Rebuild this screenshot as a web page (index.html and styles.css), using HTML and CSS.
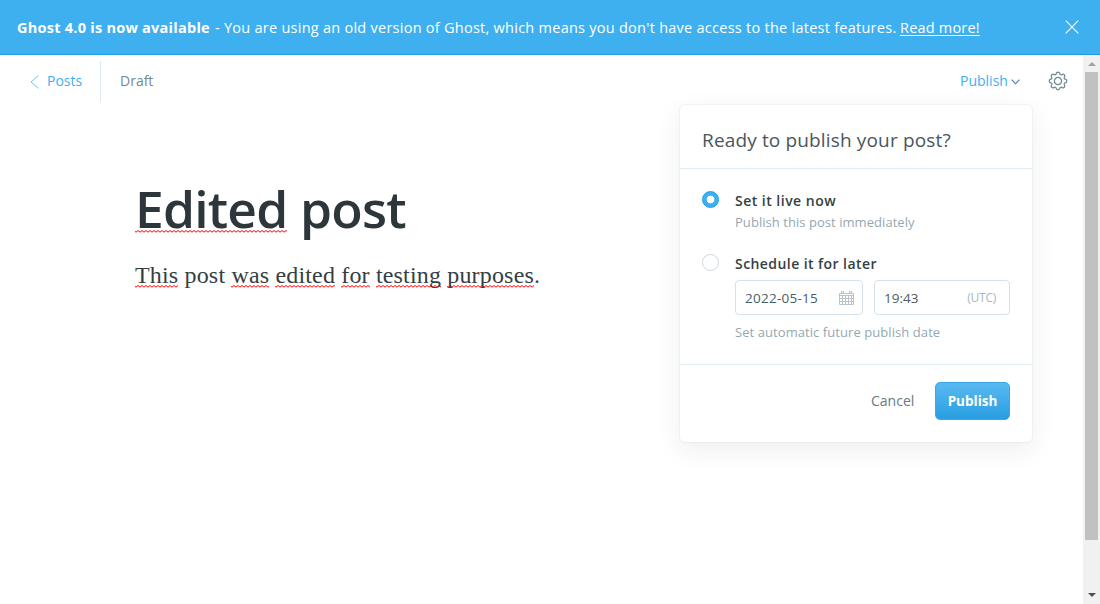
FILE: index.html
```
<!DOCTYPE html>
<html lang="en">
<head>
<meta charset="utf-8">
<title>Edited post - Ghost</title>
<link rel="stylesheet" href="styles.css">
</head>
<body>
<div class="banner">
  <div class="banner-text"><b class="banner-title">Ghost 4.0 is now available</b><span class="banner-copy">- You are using an old version of Ghost, which means you don't have access to the latest features.</span><a class="banner-link">Read more!</a></div>
  <svg class="banner-close" width="14" height="14" viewBox="0 0 14 14"><path d="M.7.7l12.6 12.6M13.3.7L.7 13.3"/></svg>
</div>
<div class="viewport">
  <div class="editor">
    <header class="toolbar">
      <a class="back"><svg class="back-icon" width="9" height="14" viewBox="0 0 9 14"><path d="M8.3.6L1 7l7.3 6.4"/></svg><span class="back-label">Posts</span></a>
      <span class="status">Draft</span>
      <div class="actions">
        <span class="publish-link">Publish</span>
        <svg class="chevron" width="9" height="6" viewBox="0 0 9 6"><path d="M.6.6l3.9 4.2L8.4.6"/></svg>
        <svg class="gear" width="20" height="20" viewBox="-10 -10 20 20"><circle r="3.6"/><path d="M-1.9-7.200C-1.500-9.300 1.500-9.300 1.900-7.200C2.100-6.200 2.900-5.900 3.800-6.400C5.700-7.700 7.700-5.700 6.400-3.800C5.900-2.900 6.200-2.100 7.200-1.900C9.300-1.500 9.300 1.500 7.200 1.900C6.200 2.100 5.900 2.900 6.400 3.800C7.700 5.700 5.700 7.700 3.800 6.400C2.900 5.900 2.100 6.200 1.900 7.200C1.500 9.300-1.500 9.300-1.900 7.200C-2.100 6.200-2.900 5.900-3.800 6.400C-5.700 7.700-7.700 5.700-6.400 3.800C-5.900 2.900-6.200 2.100-7.200 1.900C-9.300 1.500-9.300-1.500-7.200-1.900C-6.200-2.100-5.900-2.900-6.400-3.800C-7.700-5.700-5.700-7.700-3.800-6.400C-2.900-5.900-2.100-6.200-1.900-7.200Z"/></svg>
      </div>
    </header>
    <main class="post">
      <h1 class="title"><span class="misspelt">Edited</span> post</h1>
      <p class="body"><span class="misspelt">This</span> post <span class="misspelt">was</span> <span class="misspelt">edited</span> <span class="misspelt">for</span> <span class="misspelt">testing</span> <span class="misspelt">purposes</span>.</p>
    </main>
    <section class="dialog">
      <h2 class="dialog-head"><span class="dialog-title">Ready to publish your post?</span></h2>
      <div class="dialog-body">
        <div class="option">
          <span class="radio radio-on"></span>
          <div class="option-main"><div class="label label-now">Set it live now</div><div class="hint hint-now">Publish this post immediately</div></div>
        </div>
        <div class="option option-later">
          <span class="radio"></span>
          <div class="option-main">
            <div class="label label-later">Schedule it for later</div>
            <div class="fields">
              <div class="field field-date"><span class="date">2022-05-15</span>
                <svg class="calendar" width="15" height="14" viewBox="0 0 15 14"><path d="M.5 2.500h14v11H.5zM.5 4.500h14M.5 7.500h14M.5 10.500h14M3.500 4.500v9M6.500 4.500v9M9.500 4.500v9M12.500 4.500v9M2.500.5h2v2h-2zM10.500.5h2v2h-2z"/></svg>
              </div>
              <div class="field field-time"><span class="time">19:43</span><span class="zone">(UTC)</span></div>
            </div>
            <div class="hint hint-later">Set automatic future publish date</div>
          </div>
        </div>
      </div>
      <div class="dialog-foot"><span class="cancel">Cancel</span><button class="confirm"><span class="confirm-label">Publish</span></button></div>
    </section>
  </div>
  <div class="scrollbar">
    <svg class="arrow arrow-up" width="8" height="4" viewBox="0 0 8 4"><path d="M4 0l4 4H0z"/></svg>
    <div class="thumb"></div>
    <svg class="arrow" width="8" height="4" viewBox="0 0 8 4"><path d="M0 0h8L4 4z"/></svg>
  </div>
</div>
</body>
</html>
```
FILE: styles.css
```
* { box-sizing: border-box; }
body { margin: 0; width: 1100px; height: 604px; overflow: hidden; display: flex; flex-direction: column; background: #fff; color: #343f44; font-family: "Open Sans", "Noto Sans", sans-serif; font-size: 14px; }
svg { display: block; fill: none; flex: none; }
span, a, b { white-space: nowrap; }

.banner { height: 55px; flex: none; display: flex; align-items: center; justify-content: space-between; padding: 0 21px 0 17px; background: #3eb0ef; border-bottom: 1px solid #1c9de6; color: #fff; }
.banner-text { display: flex; font-size: 14.500px; line-height: 20px; margin-top: 2px; }
.banner-title { width: 198px; letter-spacing: .25px; }
.banner-copy { width: 685px; letter-spacing: .26px; }
.banner-link { text-decoration: underline; text-underline-offset: 2px; letter-spacing: .2px; }
.banner-close { stroke: #fff; stroke-width: 1.100; margin-bottom: 1px; }

.viewport { flex: 1; display: flex; min-height: 0; }
.editor { flex: 1; position: relative; }
.toolbar { height: 53px; display: flex; align-items: center; padding: 0 15px 1px 30px; }
.back { display: flex; align-items: center; width: 71px; height: 41px; margin-top: 1px; border-right: 1px solid #dfe9f2; color: #3eb0ef; }
.back-label { margin-top: -2px; }
.back-icon { stroke: #6cc2f2; margin-right: 8px; }
.status { margin: -1px 0 0 19px; color: #738a94; }
.actions { margin-left: auto; display: flex; align-items: center; }
.publish-link { color: #3eb0ef; width: 47px; margin: -1px 1px 0 -1px; }
.chevron { stroke: #58788b; stroke-width: 1.100; margin-left: 3px; margin-right: 1px; margin-top: 1px; }
.gear { stroke: #738a94; stroke-width: 1.300; margin-left: 27px; }

.post { padding: 67px 135px 0; }
.title { margin: 0; color: #2c363b; font-size: 51.500px; line-height: 66px; font-weight: 600; letter-spacing: -.8px; }
.body { margin: 19px 0 0; font-family: "Liberation Serif", serif; font-size: 24px; line-height: 30px; color: #343f44; white-space: nowrap; letter-spacing: .17px; }
.misspelt { background: url("data:image/svg+xml,%3Csvg xmlns='http://www.w3.org/2000/svg' width='4' height='3'%3E%3Cpath d='M-1 .5L1 2.200L3 .5L5 2.200' fill='none' stroke='red' stroke-width='1'/%3E%3C/svg%3E") repeat-x left bottom; }
.title .misspelt { background-position: left bottom 10px; }

.dialog { position: absolute; left: 680px; top: 50px; width: 352px; height: 337px; background: #fff; border-radius: 5px; box-shadow: 0 0 0 1px rgba(99,114,130,.06), 0 8px 26px rgba(27,39,51,.08); display: flex; flex-direction: column; }
.dialog-head { margin: 0; height: 64px; display: flex; align-items: center; padding: 7px 22px 0; border-bottom: 1px solid #e3ebf2; font-size: 19px; font-weight: 400; color: #4a565c; letter-spacing: .15px; }
.dialog-body { flex: 1; padding: 22px 22px 0; }
.option { display: flex; }
.option-later { margin-top: 22px; }
.radio { width: 17px; height: 17px; flex: none; border: 1px solid #c5d9e8; border-radius: 50%; margin-right: 16px; }
.radio-on { border-color: #1c9de6; background: radial-gradient(circle, #fff 3.500px, #3eb0ef 4.200px); }
.option-main { flex: 1; }
.label { line-height: 20px; font-weight: 600; color: #343f44; }
.label-now { height: 21px; letter-spacing: .48px; }
.label-later { letter-spacing: .43px; }
.hint { line-height: 20px; color: #95a8b1; font-size: 13px; font-weight: 400; white-space: nowrap; letter-spacing: .05px; }
.hint-later { margin-top: 7px; letter-spacing: .07px; }
.fields { display: flex; gap: 11px; margin-top: 6px; }
.field { height: 35px; display: flex; align-items: center; justify-content: space-between; border: 1px solid #d3e2ed; border-radius: 4px; padding: 0 9px; color: #4d5c63; font-size: 13.500px; }
.date { letter-spacing: .25px; }
.field-date { width: 128px; padding-right: 8px; }
.field-time { flex: 1; padding-right: 13px; }
.calendar { stroke: #b9c4ca; stroke-width: 1; }
.zone { font-size: 12px; color: #a9b7bf; letter-spacing: -.25px; }
.dialog-foot { height: 78px; display: flex; align-items: center; justify-content: flex-end; padding: 0 22px 5px; border-top: 1px solid #e3ebf2; }
.cancel { color: #667a84; margin: -1px 21px 0 0; width: 43px; }
.confirm { width: 75px; height: 38px; border: 1px solid #3ba8e5; border-radius: 5px; padding: 0; background: linear-gradient(#59b9f0, #289fe3); color: #fff; font: 700 13.500px "Open Sans", sans-serif; }

.scrollbar { width: 17px; flex: none; background: #f1f1f1; display: flex; flex-direction: column; align-items: center; padding-bottom: 7px; justify-content: space-between; }
.arrow { fill: #505050; }
.arrow-up { fill: #a3a3a3; margin-top: 7px; }
.thumb { width: 13px; height: 468px; margin-bottom: 47px; background: #c1c1c1; }
```
